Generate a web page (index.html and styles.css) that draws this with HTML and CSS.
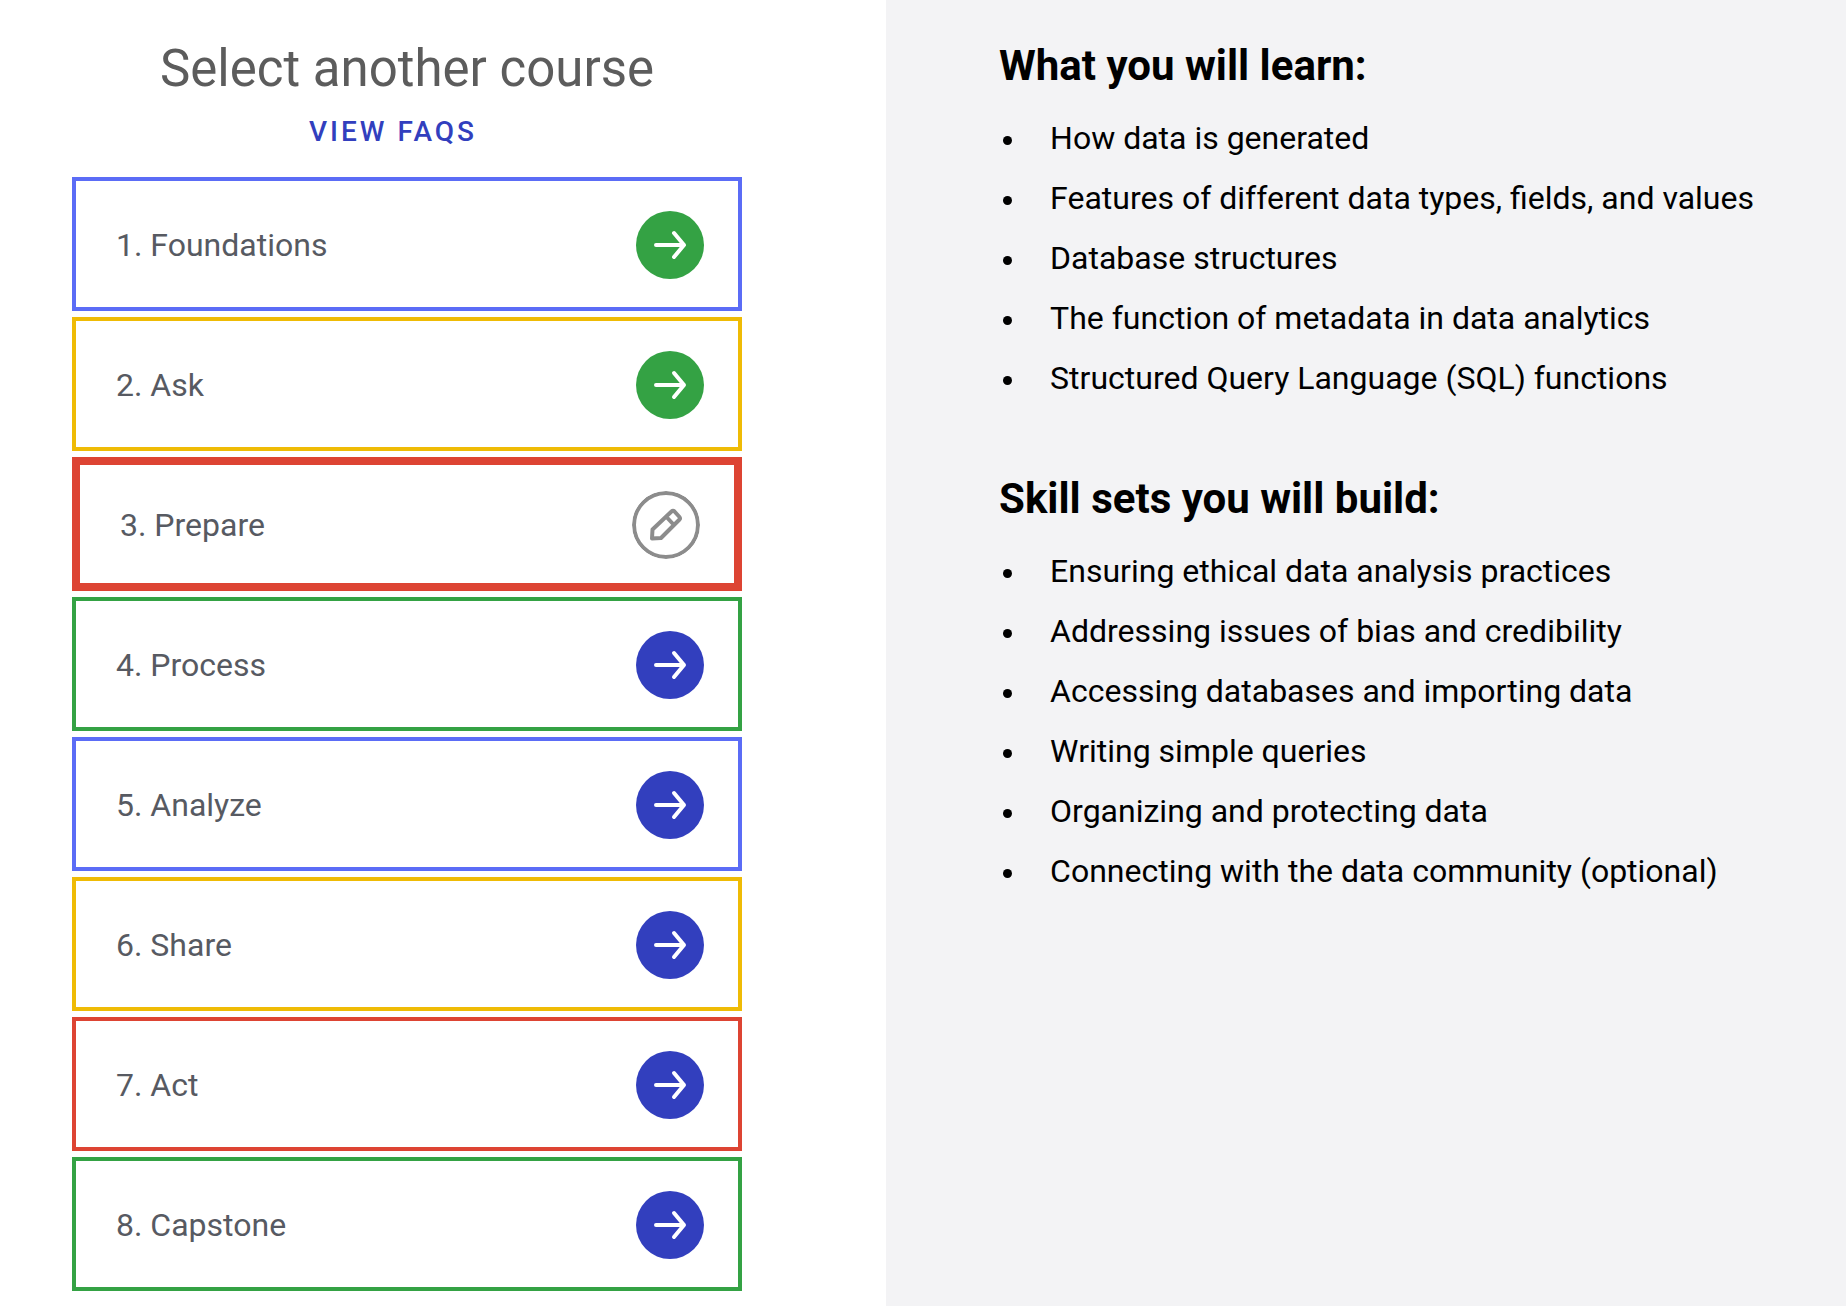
FILE: index.html
```html
<!DOCTYPE html>
<html lang="en">
<head>
<meta charset="utf-8">
<meta name="viewport" content="width=device-width, initial-scale=1">
<title>Select another course</title>
<link rel="stylesheet" href="styles.css">
</head>
<body>
<svg class="sprite" aria-hidden="true">
  <symbol id="arrow" viewBox="0 0 68 68">
    <path d="M20 34H48M38 22L48 34L38 46" fill="none" stroke="currentColor" stroke-width="4" stroke-linecap="round" stroke-linejoin="round"/>
  </symbol>
  <symbol id="pencil" viewBox="0 0 68 68">
    <circle cx="34" cy="34" r="32" fill="none" stroke="currentColor" stroke-width="4"/>
    <path d="M20 47.500L20.500 38.500L39.500 20.500Q41 19 42.500 20.500L47.500 26Q48.500 27.500 47.500 28.500L29 47ZM34.500 26L41.500 33.500" fill="none" stroke="currentColor" stroke-width="4" stroke-linejoin="round"/>
  </symbol>
</svg>
<main class="page">
  <section class="courses">
    <h1 class="courses-title">Select another course</h1>
    <a class="faq-link" href="#faqs">VIEW FAQS</a>
    <nav class="course-list" aria-label="Courses">
      <a class="course blue done" href="#foundations">1. Foundations<svg class="course-icon"><use href="#arrow"/></svg></a>
      <a class="course yellow done" href="#ask">2. Ask<svg class="course-icon"><use href="#arrow"/></svg></a>
      <a class="course red current" href="#prepare" aria-current="page">3. Prepare<svg class="course-icon"><use href="#pencil"/></svg></a>
      <a class="course green" href="#process">4. Process<svg class="course-icon"><use href="#arrow"/></svg></a>
      <a class="course blue" href="#analyze">5. Analyze<svg class="course-icon"><use href="#arrow"/></svg></a>
      <a class="course yellow" href="#share">6. Share<svg class="course-icon"><use href="#arrow"/></svg></a>
      <a class="course red" href="#act">7. Act<svg class="course-icon"><use href="#arrow"/></svg></a>
      <a class="course green" href="#capstone">8. Capstone<svg class="course-icon"><use href="#arrow"/></svg></a>
    </nav>
  </section>
  <section class="details">
    <div class="topic">
      <h2 class="topic-title">What you will learn:</h2>
      <ul class="topic-list">
        <li>How data is generated</li>
        <li>Features of different data types, fields, and values</li>
        <li>Database structures</li>
        <li>The function of metadata in data analytics</li>
        <li>Structured Query Language (SQL) functions</li>
      </ul>
    </div>
    <div class="topic">
      <h2 class="topic-title">Skill sets you will build:</h2>
      <ul class="topic-list">
        <li>Ensuring ethical data analysis practices</li>
        <li>Addressing issues of bias and credibility</li>
        <li>Accessing databases and importing data</li>
        <li>Writing simple queries</li>
        <li>Organizing and protecting data</li>
        <li>Connecting with the data community (optional)</li>
      </ul>
    </div>
  </section>
</main>
</body>
</html>
```

FILE: styles.css
```css
* {
  box-sizing: border-box;
}

body {
  margin: 0;
  background: #fff;
  color: #000;
  font-family: "Google Sans", Roboto, "Liberation Sans", sans-serif;
  font-size: 32px;
}

.sprite {
  display: none;
}

.page {
  display: grid;
  grid-template-columns: 48fr 52fr;
  min-height: 100vh;
}

.courses {
  display: flex;
  flex-direction: column;
  align-items: center;
  padding: 41px 144px 15px 72px;
}

.courses-title {
  margin: 0 0 17px;
  color: #5c5c5c;
  font-size: 51px;
  font-weight: 400;
  line-height: 56px;
}

.faq-link {
  margin: 0 28px 27px 0;
  color: #323fbe;
  font-size: 28px;
  font-weight: 500;
  line-height: 36px;
  letter-spacing: 3px;
  text-decoration: none;
}

.course-list {
  display: flex;
  flex-direction: column;
  align-self: stretch;
  gap: 6px;
}

.course {
  display: flex;
  align-items: center;
  justify-content: space-between;
  min-height: 134px;
  padding: 2px 34px 0 40px;
  border: 4px solid;
  color: #575a62;
  text-decoration: none;
}

.course-icon {
  width: 68px;
  height: 68px;
  border-radius: 50%;
  background: #323fbe;
  color: #fff;
}

.done .course-icon {
  background: #34a244;
}

.blue {
  border-color: #5b6cf6;
}

.yellow {
  border-color: #efbb05;
}

.red {
  border-color: #dd4433;
}

.green {
  border-color: #34a244;
}

.current {
  border-width: 8px;
}

.current .course-icon {
  background: none;
  color: #8c8c8c;
}

.details {
  display: flex;
  flex-direction: column;
  gap: 61px;
  padding: 36px 64px 60px 113px;
  background: #f3f3f5;
}

.topic-title {
  margin: 0 0 12px;
  font-size: 42px;
  font-weight: 700;
  line-height: 60px;
}

.topic-list {
  margin: 0;
  padding: 0;
  list-style: none;
  line-height: 60px;
}

.topic-list li {
  display: flex;
  gap: 38px;
}

.topic-list li::before {
  content: "";
  flex: none;
  width: 9px;
  height: 9px;
  margin: 28px 0 0 4px;
  border-radius: 50%;
  background: #000;
}
```
